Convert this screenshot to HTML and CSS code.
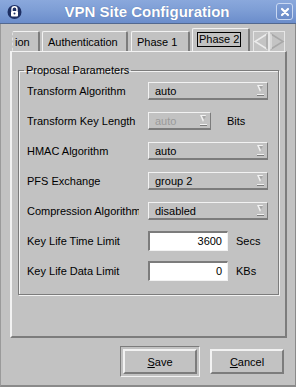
FILE: index.html
```html
<!DOCTYPE html>
<html>

<head>
  <title>VPN Site Configuration</title>
  <link rel="stylesheet" href="styles.css">
</head>

<body>
  <div class="window">
    <div class="titlebar">
      <svg class="lock-icon" width="15" height="16" viewBox="0 0 15 16">
        <circle cx="7.5" cy="8" r="7" fill="#1d2f63" />
        <path d="M5 7 V5.2 a2.5 2.5 0 0 1 5 0 V7" fill="none" stroke="#fff" stroke-width="1.4" />
        <rect x="4" y="7" width="7" height="5.5" rx="1" fill="#fff" />
        <circle cx="7.5" cy="9.6" r="1" fill="#1d2f63" />
      </svg>
      <span class="title">VPN Site Configuration</span>
      <span class="close-btn">
        <svg width="10" height="10" viewBox="0 0 10 10">
          <path d="M2 2 L8 8 M8 2 L2 8" stroke="#fff" stroke-width="2.2" stroke-linecap="round" />
        </svg>
      </span>
    </div>

    <div class="tabs">
      <div class="tab tab-cut">ion</div>
      <div class="tab tab-auth">Authentication</div>
      <div class="tab tab-p1">Phase 1</div>
      <div class="tab selected"><span class="focus">Phase 2</span></div>
      <div class="tab-arrows">
        <svg width="32" height="21" viewBox="0 0 32 21">
          <rect x="0.5" y="0.5" width="15" height="20" fill="#c4c4c4" stroke="#e6e6e6" />
          <rect x="16.5" y="0.5" width="15" height="20" fill="#c4c4c4" stroke="#e6e6e6" />
          <path d="M14 3 L2 10.5 L14 18" fill="none" stroke="#ececec" stroke-width="1.5" />
          <path d="M14 18 L14 3" stroke="#9a9a9a" stroke-width="1" />
          <path d="M18 3 L30 10.5 L18 18" fill="none" stroke="#a8a8a8" stroke-width="1.5" />
          <path d="M18 3 L18 18" stroke="#ececec" stroke-width="1" />
        </svg>
      </div>
    </div>

    <div class="panel">
      <fieldset class="group">
        <legend>Proposal Parameters</legend>

        <div class="row">
          <label>Transform Algorithm</label>
          <div class="combo wide"><span>auto</span><i class="arrow"></i></div>
        </div>
        <div class="row">
          <label>Transform Key Length</label>
          <div class="combo narrow disabled"><span>auto</span><i class="arrow"></i></div>
          <span class="unit bits">Bits</span>
        </div>
        <div class="row">
          <label>HMAC Algorithm</label>
          <div class="combo wide"><span>auto</span><i class="arrow"></i></div>
        </div>
        <div class="row">
          <label>PFS Exchange</label>
          <div class="combo wide"><span>group 2</span><i class="arrow"></i></div>
        </div>
        <div class="row">
          <label>Compression Algorithm</label>
          <div class="combo wide"><span>disabled</span><i class="arrow"></i></div>
        </div>
        <div class="row">
          <label>Key Life Time Limit</label>
          <div class="field">3600</div>
          <span class="unit">Secs</span>
        </div>
        <div class="row">
          <label>Key Life Data Limit</label>
          <div class="field">0</div>
          <span class="unit">KBs</span>
        </div>
      </fieldset>
    </div>

    <div class="buttons">
      <div class="default-frame">
        <div class="button"><u>S</u>ave</div>
      </div>
      <div class="button"><u>C</u>ancel</div>
    </div>
  </div>
</body>

</html>
```

FILE: styles.css
```css
/* window colours */
:root {
  --face: #c2c2c2;
  --light: #f2f2f2;
  --shadow: #7c7c7c;
  --dark: #4a4a4a;
  --title-top: #7f9fd6;
  --title-bottom: #6b8dcb;
}

body {
  margin: 0;
  padding: 0;
  font-family: "Liberation Sans", Arial, sans-serif;
  font-size: 11px;
  color: #000;
  background-color: var(--face);
}

.window {
  width: 296px;
  height: 387px;
  box-sizing: border-box;
  display: flex;
  flex-direction: column;
  background-color: var(--face);
  border-left: 1px solid #9a9a9a;
  border-right: 1px solid #8a8a8a;
  border-bottom: 2px solid #8a8a8a;
}

/* title bar */
.titlebar {
  height: 23px;
  margin: 0 -1px;
  display: flex;
  align-items: center;
  background: linear-gradient(#8aa8dc, var(--title-top) 40%, var(--title-bottom));
  border-bottom: 1px solid #52688f;
}

.lock-icon {
  margin-left: 7px;
}

.title {
  flex: 1;
  text-align: center;
  color: #fff;
  font-weight: bold;
  font-size: 15px;
  text-shadow: 0 0 1px #4c6aa0;
  margin-right: 4px;
}

.close-btn {
  width: 15px;
  height: 15px;
  margin-right: 3px;
  border: 1px solid #c9d8f2;
  border-radius: 3px;
  background: linear-gradient(#7e9ed6, #6a8bc8);
  display: flex;
  align-items: center;
  justify-content: center;
}

/* tab strip */
.tabs {
  height: 27px;
  display: flex;
  align-items: flex-end;
  padding-left: 11px;
}

.tab {
  box-sizing: border-box;
  height: 20px;
  padding: 0 0 0 5px;
  display: flex;
  align-items: center;
  border-top: 1px solid var(--light);
  border-left: 1px solid var(--light);
  border-right: 2px solid var(--shadow);
  border-radius: 2px 2px 0 0;
  margin-right: 2px;
  white-space: nowrap;
  overflow: hidden;
}

.tab-cut {
  width: 28px;
  padding-left: 2px;
  border-left: 1px dashed #e0e0e0;
}

.tab-auth {
  width: 86px;
  margin-right: 3px;
}

.tab-p1 {
  width: 59px;
}

.tab.selected {
  height: 23px;
  width: 58px;
  padding: 3px 0 0 4px;
  margin-right: 3px;
  align-items: flex-start;
}

.focus {
  border: 1px solid #000;
  padding: 0 1px 1px 1px;
  line-height: 12px;
}

.tab-arrows {
  margin-bottom: -1px;
  height: 21px;
}

/* main notebook page */
.panel {
  height: 287px;
  box-sizing: border-box;
  margin: 0 8px 0 9px;
  border-top: 1px solid var(--light);
  border-left: 2px solid var(--light);
  border-right: 2px solid var(--shadow);
  border-bottom: 2px solid var(--shadow);
  padding: 12px 6px 0 6px;
}

.group {
  margin: 0;
  padding: 0 0 12px 8px;
  border: 1px solid var(--shadow);
  box-shadow: inset 1px 1px 0 var(--light), 1px 1px 0 var(--light);
  height: 231px;
  box-sizing: border-box;
}

.group legend {
  padding: 0 2px;
  margin-left: -3px;
}

.row {
  height: 30px;
  display: flex;
  align-items: center;
}

.row label {
  width: 112px;
  margin-right: 9px;
  overflow: hidden;
  white-space: nowrap;
  flex-shrink: 0;
}

/* combo boxes */
.combo {
  box-sizing: border-box;
  height: 18px;
  display: flex;
  align-items: center;
  justify-content: space-between;
  padding: 0 3px 0 6px;
  border-top: 1px solid var(--light);
  border-left: 1px solid var(--light);
  border-right: 1px solid var(--shadow);
  border-bottom: 2px solid var(--shadow);
}

.combo.wide {
  width: 120px;
}

.combo.narrow {
  width: 63px;
}

.combo.disabled span {
  color: #9a9a9a;
}

.arrow {
  width: 7px;
  height: 11px;
  background:
    linear-gradient(var(--light), var(--light)) 0 9px / 7px 1px no-repeat,
    linear-gradient(var(--shadow), var(--shadow)) 0 10px / 7px 1px no-repeat;
  position: relative;
}

.arrow::before {
  content: "";
  position: absolute;
  left: 0;
  top: 0;
  border-left: 3.5px solid transparent;
  border-right: 3.5px solid transparent;
  border-top: 7px solid var(--light);
}

.arrow::after {
  content: "";
  position: absolute;
  left: 2px;
  top: 1px;
  border-left: 2px solid transparent;
  border-right: 2px solid transparent;
  border-top: 4px solid #a8a8a8;
}

/* text fields */
.field {
  box-sizing: border-box;
  width: 80px;
  height: 20px;
  background-color: #fff;
  border-top: 2px solid var(--shadow);
  border-left: 2px solid var(--shadow);
  border-right: 1px solid var(--light);
  border-bottom: 1px solid var(--light);
  text-align: right;
  padding-right: 5px;
  line-height: 17px;
}

.unit {
  margin-left: 8px;
}

.unit.bits {
  margin-left: 16px;
}

/* dialog buttons */
.buttons {
  flex: 1;
  display: flex;
  justify-content: flex-end;
  align-items: flex-start;
  padding: 8px 11px 0 0;
  gap: 10px;
}

.default-frame {
  padding: 2px;
  border-top: 1px solid var(--shadow);
  border-left: 1px solid var(--shadow);
  border-right: 1px solid var(--light);
  border-bottom: 1px solid var(--light);
}

.button {
  box-sizing: border-box;
  width: 74px;
  height: 25px;
  display: flex;
  align-items: center;
  justify-content: center;
  border-top: 2px solid var(--light);
  border-left: 2px solid var(--light);
  border-right: 2px solid var(--shadow);
  border-bottom: 2px solid var(--shadow);
}

.buttons > .button {
  margin-top: 3px;
}
```
